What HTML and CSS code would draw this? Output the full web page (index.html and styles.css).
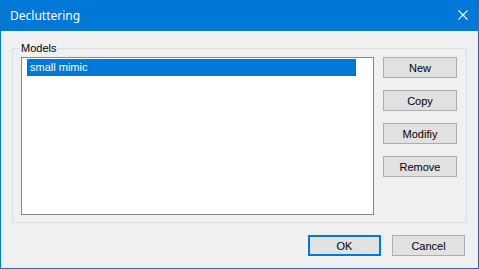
FILE: index.html
```html
<!DOCTYPE html>
<html lang="en">
<head>
    <meta charset="UTF-8">
    <title>Decluttering</title>
    <link rel="stylesheet" href="styles.css">
</head>
<body>
    <div class="window">
        <div class="titlebar">
            <span class="title">Decluttering</span>
            <svg class="close" width="10" height="10" viewBox="0 0 10 10">
                <path d="M0.5 0.5 L9.5 9.5 M9.5 0.5 L0.5 9.5" stroke="#fff" stroke-width="1.1" fill="none"/>
            </svg>
        </div>
        <div class="content">
            <fieldset class="group">
                <legend>Models</legend>
                <div class="group-body">
                    <div class="listbox">
                        <div class="item selected">small mimic</div>
                    </div>
                    <div class="side-buttons">
                        <button class="btn">New</button>
                        <button class="btn">Copy</button>
                        <button class="btn">Modifiy</button>
                        <button class="btn">Remove</button>
                    </div>
                </div>
            </fieldset>
            <div class="footer">
                <button class="btn default">OK</button>
                <button class="btn">Cancel</button>
            </div>
        </div>
    </div>
</body>
</html>
```

FILE: styles.css
```css
* {
    box-sizing: border-box;
}

body {
    margin: 0;
    font-family: "Liberation Sans", Arial, sans-serif;
    font-size: 11px;
}

.window {
    width: 479px;
    height: 269px;
    border: 1px solid #0078d7;
    border-top: none;
    background: #f0f0f0;
    display: flex;
    flex-direction: column;
}

.titlebar {
    height: 31px;
    margin: 0 -1px;
    background: #0078d7;
    color: #fff;
    display: flex;
    align-items: center;
    justify-content: space-between;
    padding: 0 11px 0 10px;
}

.title {
    font-family: "Noto Sans", "Open Sans", sans-serif;
    font-size: 12px;
    margin-top: -1px;
}

.close {
    display: block;
    margin-top: -1px;
}

.content {
    flex: 1;
    padding: 11px 11px 0 11px;
}

.group {
    margin: 0;
    border: 1px solid #dcdcdc;
    padding: 2px 9px 7px 8px;
    min-width: 0;
}

.group legend {
    padding: 0 1px;
    margin-left: -1px;
    line-height: 13px;
    color: #000;
}

.group-body {
    display: flex;
    gap: 9px;
}

.listbox {
    width: 353px;
    height: 158px;
    background: #fff;
    border: 1px solid #828790;
    padding: 1px 17px 0 5px;
}

.item {
    height: 17px;
    line-height: 17px;
    padding-left: 3px;
}

.item.selected {
    background: #0078d7;
    color: #fff;
}

.side-buttons {
    display: flex;
    flex-direction: column;
    gap: 12px;
}

.btn {
    width: 74px;
    height: 21px;
    background: #e1e1e1;
    border: 1px solid #adadad;
    font-family: "Liberation Sans", Arial, sans-serif;
    font-size: 11px;
    color: #000;
    padding: 0;
    margin: 0;
}

.footer {
    display: flex;
    justify-content: flex-end;
    gap: 11px;
    margin-top: 12px;
    margin-right: -10px;
    padding-right: 12px;
}

.footer .btn {
    width: 73px;
}

.btn.default {
    border: 2px solid #0078d7;
}
```
